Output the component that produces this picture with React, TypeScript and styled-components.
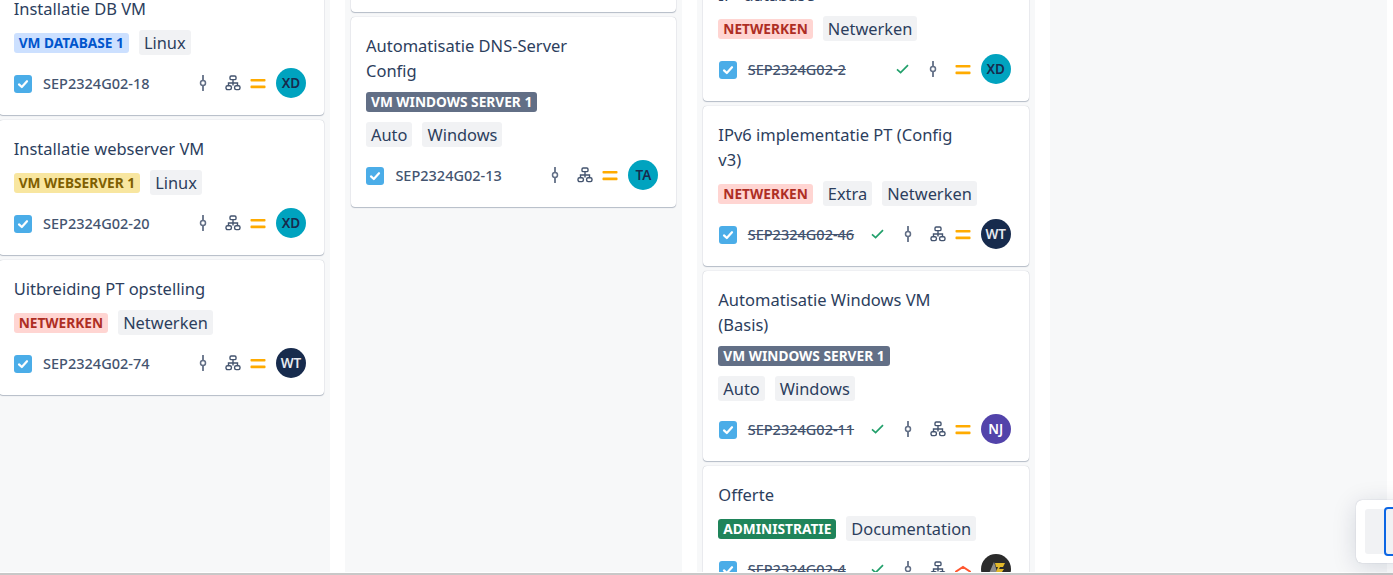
import React from 'react'
import styled, { createGlobalStyle } from 'styled-components'

type Tone = 'blue' | 'yellow' | 'red' | 'grey' | 'green'
type Priority = 'medium' | 'high'

interface Issue {
  title: string
  lozenge: string
  tone: Tone
  chips: string[]
  issueKey: string
  done?: boolean
  tree?: boolean
  priority?: Priority
  assignee: string
}

const tones: Record<Tone, { bg: string; fg: string }> = {
  blue: { bg: '#cce0ff', fg: '#0055cc' },
  yellow: { bg: '#f8e6a0', fg: '#7f5f01' },
  red: { bg: '#ffd5d2', fg: '#ae2e24' },
  grey: { bg: '#626f86', fg: '#ffffff' },
  green: { bg: '#1f845a', fg: '#ffffff' }
}

const avatars: Record<string, { bg: string; fg: string }> = {
  XD: { bg: '#00a3bf', fg: '#172b4d' },
  TA: { bg: '#00a3bf', fg: '#172b4d' },
  WT: { bg: '#172b4d', fg: '#e6e9ef' },
  NJ: { bg: '#5243aa', fg: '#ffffff' }
}

const columns: { offset: number; issues: Issue[] }[] = [
  {
    offset: -20,
    issues: [
      { title: 'Installatie DB VM', lozenge: 'VM DATABASE 1', tone: 'blue', chips: ['Linux'], issueKey: 'SEP2324G02-18', assignee: 'XD' },
      { title: 'Installatie webserver VM', lozenge: 'VM WEBSERVER 1', tone: 'yellow', chips: ['Linux'], issueKey: 'SEP2324G02-20', assignee: 'XD' },
      { title: 'Uitbreiding PT opstelling', lozenge: 'NETWERKEN', tone: 'red', chips: ['Netwerken'], issueKey: 'SEP2324G02-74', assignee: 'WT' }
    ]
  },
  {
    offset: -123,
    issues: [
      { title: 'Installatie VM', lozenge: 'VM WINDOWS SERVER 1', tone: 'grey', chips: ['Windows'], issueKey: 'SEP2324G02-12', assignee: 'TA' },
      { title: 'Automatisatie DNS-Server Config', lozenge: 'VM WINDOWS SERVER 1', tone: 'grey', chips: ['Auto', 'Windows'], issueKey: 'SEP2324G02-13', assignee: 'TA' }
    ]
  },
  {
    offset: -59,
    issues: [
      { title: 'IPv4 implementatie PT (Config) IP- database', lozenge: 'NETWERKEN', tone: 'red', chips: ['Netwerken'], issueKey: 'SEP2324G02-2', done: true, tree: false, assignee: 'XD' },
      { title: 'IPv6 implementatie PT (Config v3)', lozenge: 'NETWERKEN', tone: 'red', chips: ['Extra', 'Netwerken'], issueKey: 'SEP2324G02-46', done: true, assignee: 'WT' },
      { title: 'Automatisatie Windows VM (Basis)', lozenge: 'VM WINDOWS SERVER 1', tone: 'grey', chips: ['Auto', 'Windows'], issueKey: 'SEP2324G02-11', done: true, assignee: 'NJ' },
      { title: 'Offerte', lozenge: 'ADMINISTRATIE', tone: 'green', chips: ['Documentation'], issueKey: 'SEP2324G02-4', done: true, priority: 'high', assignee: 'LOGO' }
    ]
  },
  { offset: 0, issues: [] }
]

const TaskCheck = () => (
  <CheckBox>
    <svg width="12" height="12" viewBox="0 0 12 12" fill="none">
      <path d="M2 6.4 L4.8 9 L10 3.2" stroke="#fff" strokeWidth="2.2" strokeLinecap="round" strokeLinejoin="round" />
    </svg>
  </CheckBox>
)

const DoneTick = () => (
  <svg width="13" height="10" viewBox="0 0 13 10" fill="none">
    <path d="M1 5.4 L4.6 8.6 L12 1.2" stroke="#22a06b" strokeWidth="1.7" />
  </svg>
)

const CommitIcon = () => (
  <svg width="8" height="16" viewBox="0 0 8 16" fill="none">
    <path d="M4 .5 V4.8 M4 11.2 V15.5" stroke="#626f86" strokeWidth="1.8" strokeLinecap="round" />
    <circle cx="4" cy="8" r="2.5" stroke="#626f86" strokeWidth="1.5" />
  </svg>
)

const TreeIcon = () => (
  <svg width="16" height="16" viewBox="0 0 16 16" fill="none" stroke="#44546f" strokeWidth="1.4">
    <rect x="5" y="1" width="6" height="3.6" rx="1.2" />
    <path d="M8 4.6 V10.5 M3.5 10.5 V8 H12.5 V10.5" />
    <rect x="1" y="10.8" width="5.4" height="3.8" rx="1.5" />
    <rect x="9.6" y="10.8" width="5.4" height="3.8" rx="1.5" />
  </svg>
)

const PriorityIcon = ({ level }: { level: Priority }) =>
  level === 'medium' ? (
    <svg width="16" height="11" viewBox="0 0 16 11" fill="none">
      <rect x=".5" y="1" width="15" height="2.6" rx=".8" fill="#ffab00" />
      <rect x=".5" y="7.6" width="15" height="2.6" rx=".8" fill="#ffab00" />
    </svg>
  ) : (
    <svg width="16" height="16" viewBox="0 0 16 16" fill="none">
      <path d="M1 10.5 L8 6 L15 10.5 M1 17 L8 12.5 L15 17" stroke="#ff5630" strokeWidth="2" strokeLinecap="round" />
    </svg>
  )

const LogoAvatar = () => (
  <svg width="30" height="30" viewBox="0 0 30 30">
    <circle cx="15" cy="15" r="15" fill="#2b2b2b" />
    <path d="M13 8 L6 24 H18 Z" fill="#8d8d8d" />
    <path d="M14 9 H24 L22 13 H19 L18 15 H23 L17 24 H14 L18 18 H15 L17 13 H15 Z" fill="#e3b92b" />
  </svg>
)

const Card = ({ issue }: { issue: Issue }) => {
  const person = avatars[issue.assignee]
  return (
    <CardShell>
      <Title>{issue.title}</Title>
      <TagRow>
        <Lozenge $tone={issue.tone}>{issue.lozenge}</Lozenge>
        <ChipGroup>
          {issue.chips.map((chip) => (
            <Chip key={chip}>{chip}</Chip>
          ))}
        </ChipGroup>
      </TagRow>
      <Footer>
        <TaskCheck />
        <IssueKey $done={issue.done}>{issue.issueKey}</IssueKey>
        <Icons>
          {issue.done && (
            <IconSlot $width={25}>
              <DoneTick />
            </IconSlot>
          )}
          <IconSlot $width={35}>
            <CommitIcon />
          </IconSlot>
          {issue.tree !== false && (
            <IconSlot $width={25}>
              <TreeIcon />
            </IconSlot>
          )}
          <IconSlot $width={25}>
            <PriorityIcon level={issue.priority ?? 'medium'} />
          </IconSlot>
        </Icons>
        {person ? (
          <Avatar $bg={person.bg} $fg={person.fg}>
            {issue.assignee}
          </Avatar>
        ) : (
          <AvatarFrame>
            <LogoAvatar />
          </AvatarFrame>
        )}
      </Footer>
    </CardShell>
  )
}

export default function App() {
  return (
    <>
      <GlobalStyle />
      <Page>
        <Board>
          {columns.map((column, index) => (
            <Column key={index}>
              <CardList $offset={column.offset}>
                {column.issues.map((issue) => (
                  <Card key={issue.issueKey} issue={issue} />
                ))}
              </CardList>
            </Column>
          ))}
        </Board>
        <BottomRule />
        <FloatingPanel>
          <PanelSlot />
          <PanelFocus />
        </FloatingPanel>
      </Page>
    </>
  )
}

const GlobalStyle = createGlobalStyle`
  html, body {
    margin: 0;
    background: #ffffff;
    overflow: hidden;
  }
  * {
    box-sizing: border-box;
  }
`

const Page = styled.div`
  position: relative;
  width: 1393px;
  height: 575px;
  display: flex;
  flex-direction: column;
  overflow: hidden;
  font-family: 'Noto Sans', 'Open Sans', sans-serif;
  color: #172b4d;
`

const Board = styled.div`
  flex: 1;
  display: flex;
  gap: 15px;
  margin-left: -7.33px;
  min-height: 0;
`

const Column = styled.div`
  width: 337.33px;
  flex: none;
  height: 572px;
  padding: 0 6px;
  background: #f7f8f9;
  overflow: hidden;
`

const CardList = styled.div<{ $offset: number }>`
  display: flex;
  flex-direction: column;
  gap: 5px;
  margin-top: ${(p) => p.$offset}px;
`

const CardShell = styled.div`
  background: #ffffff;
  border-radius: 4px;
  padding: 16px 18px 17px 15px;
  box-shadow: 0 1px 1px #091e4240, 0 0 1px #091e424f;
`

const Title = styled.div`
  font-size: 16.5px;
  line-height: 25px;
  max-width: 250px;
  margin-bottom: 9px;
  color: #2c3e5d;
`

const TagRow = styled.div`
  display: flex;
  flex-wrap: wrap;
  align-items: center;
  gap: 10px;
`

const Lozenge = styled.span<{ $tone: Tone }>`
  height: 20px;
  padding: 0 5px;
  border-radius: 3px;
  font-size: 13.7px;
  font-weight: 700;
  line-height: 20px;
  white-space: nowrap;
  background: ${(p) => tones[p.$tone].bg};
  color: ${(p) => tones[p.$tone].fg};
`

const ChipGroup = styled.div`
  display: flex;
  gap: 10px;
`

const Chip = styled.span`
  height: 25px;
  padding: 0 5px;
  border-radius: 3px;
  font-size: 16.4px;
  line-height: 26px;
  background: #f1f2f4;
  color: #2c3e5d;
`

const Footer = styled.div`
  display: flex;
  align-items: center;
  height: 30px;
  margin-top: 13px;
`

const CheckBox = styled.span`
  width: 18px;
  height: 18px;
  flex: none;
  margin: 1px 0 0 0.4px;
  display: flex;
  align-items: center;
  justify-content: center;
  border-radius: 3px;
  background: #4bade8;
`

const IssueKey = styled.span<{ $done?: boolean }>`
  margin-left: 11px;
  font-size: 14.5px;
  font-weight: 500;
  color: #44546f;
  text-decoration: ${(p) => (p.$done ? 'line-through' : 'none')};
`

const Icons = styled.div`
  margin-left: auto;
  display: flex;
  align-items: center;
`

const IconSlot = styled.span<{ $width: number }>`
  width: ${(p) => p.$width}px;
  display: flex;
  align-items: center;
  justify-content: center;
`

const Avatar = styled.span<{ $bg: string; $fg: string }>`
  width: 30px;
  height: 30px;
  flex: none;
  margin-left: 5.5px;
  display: flex;
  align-items: center;
  justify-content: center;
  border-radius: 50%;
  font-size: 13.5px;
  font-weight: 600;
  background: ${(p) => p.$bg};
  color: ${(p) => p.$fg};
`

const AvatarFrame = styled.span`
  width: 30px;
  height: 30px;
  flex: none;
  margin-left: 5.5px;
  display: flex;
`

const BottomRule = styled.div`
  height: 2px;
  flex: none;
  background: #c8c8c8;
`

const FloatingPanel = styled.div`
  position: absolute;
  left: 1356px;
  top: 500px;
  width: 60px;
  height: 63px;
  display: flex;
  align-items: center;
  padding-left: 9px;
  background: #ffffff;
  border-radius: 6px;
  box-shadow: 0 4px 24px #091e4226, 0 0 1px #091e424f;
`

const PanelSlot = styled.div`
  width: 19px;
  height: 45px;
  border-radius: 3px 0 0 3px;
  background: #f1f2f4;
`

const PanelFocus = styled.div`
  width: 30px;
  height: 49px;
  flex: none;
  border: 2px solid #0c66e4;
  border-radius: 4px;
  background: #f1f2f4;
`
